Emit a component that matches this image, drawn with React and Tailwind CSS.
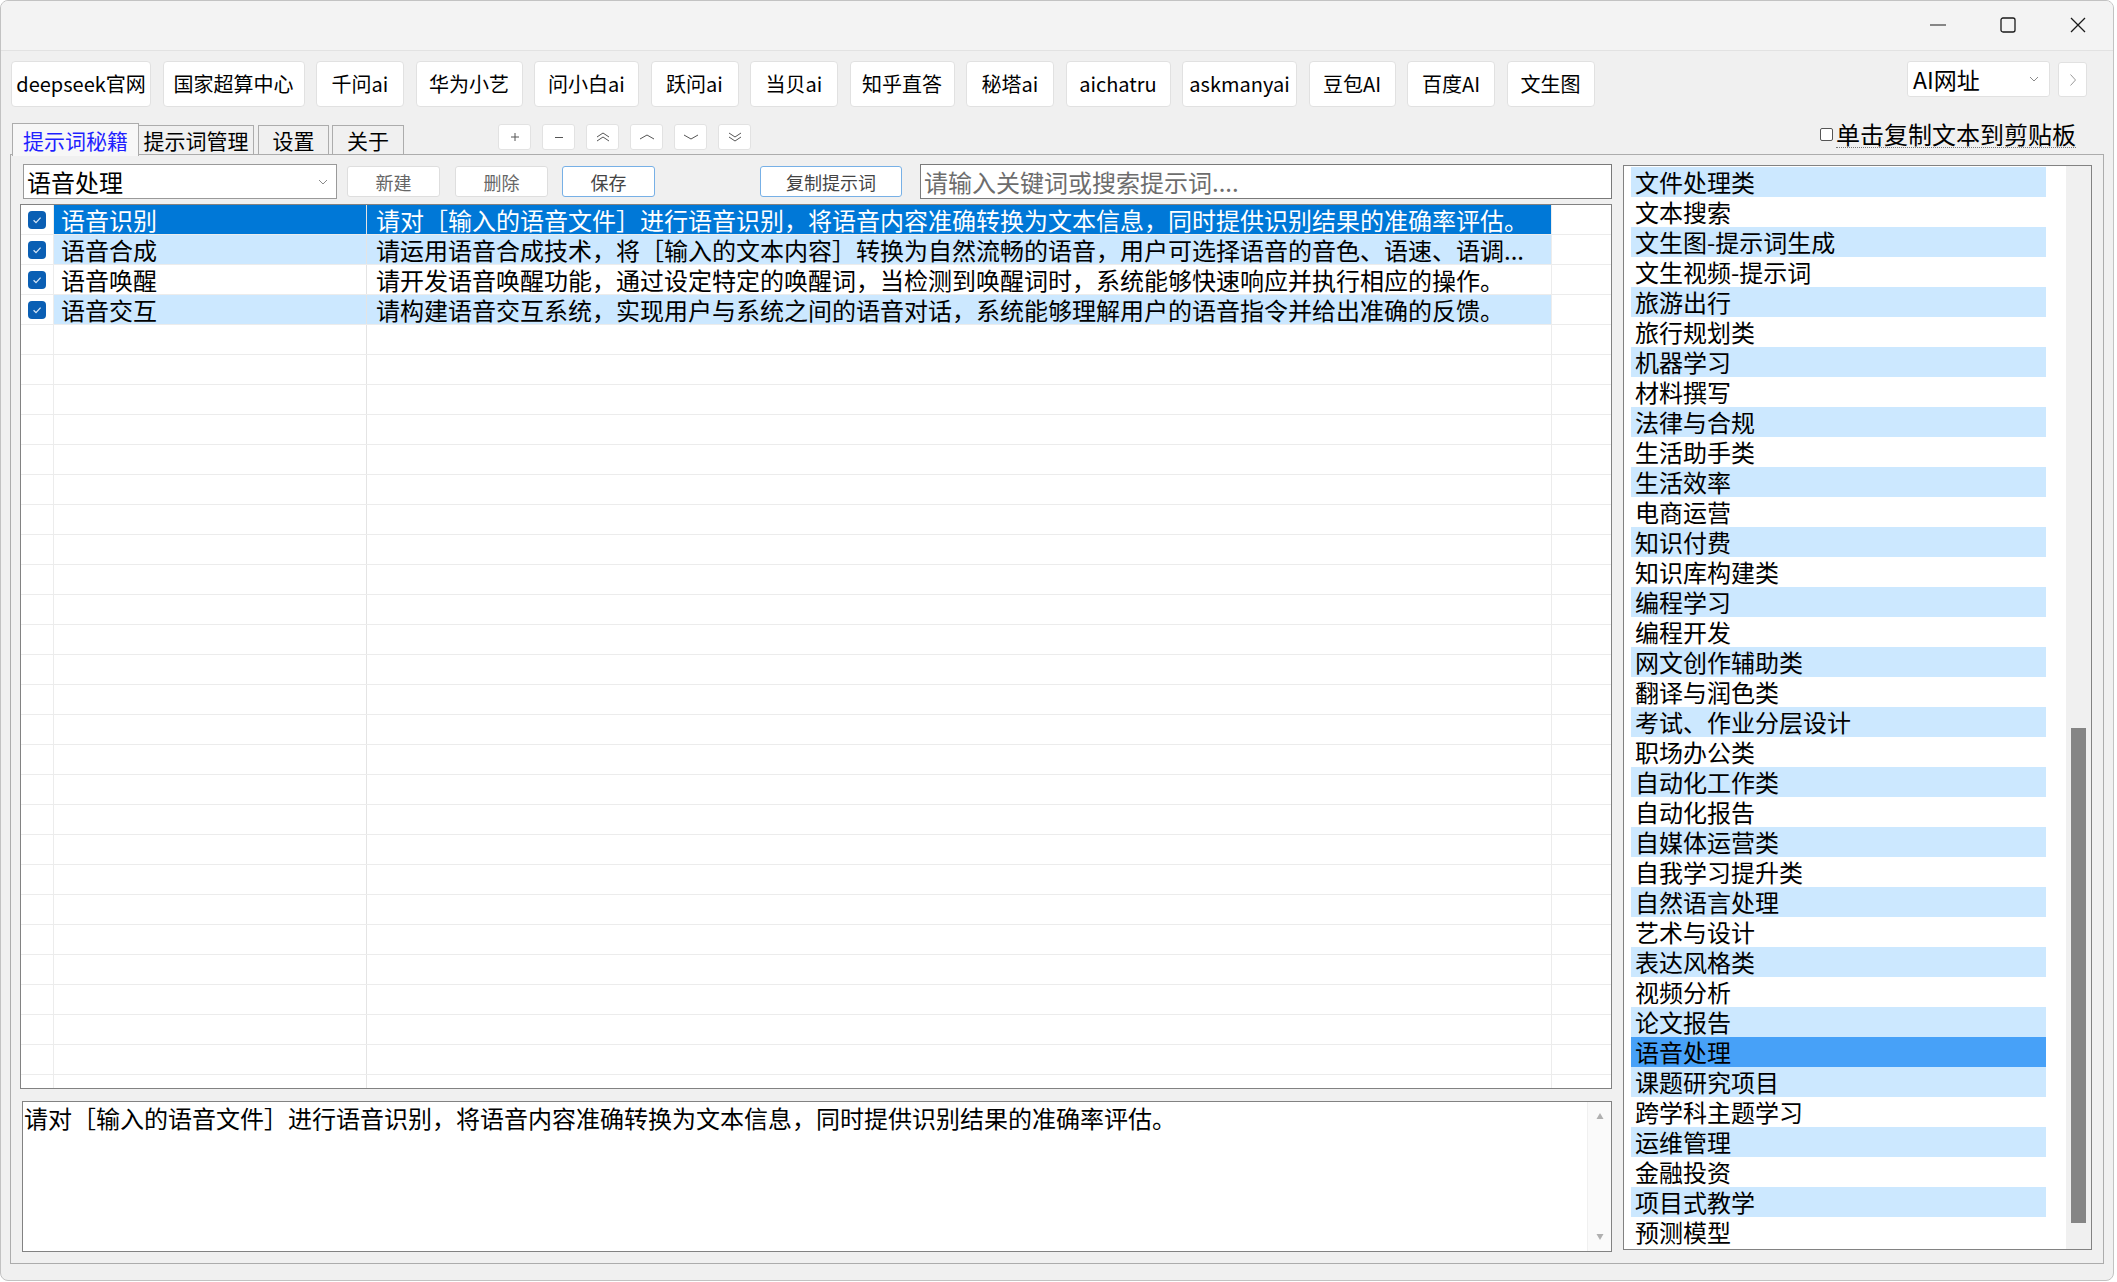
import React from 'react'

const tools = [
  { label: 'deepseek官网', w: 'w-[140px]' },
  { label: '国家超算中心', w: 'w-[142px]' },
  { label: '千问ai', w: 'w-[88px]' },
  { label: '华为小艺', w: 'w-[107px]' },
  { label: '问小白ai', w: 'w-[105px]' },
  { label: '跃问ai', w: 'w-[88px]' },
  { label: '当贝ai', w: 'w-[88px]' },
  { label: '知乎直答', w: 'w-[105px]' },
  { label: '秘塔ai', w: 'w-[88px]' },
  { label: 'aichatru', w: 'w-[105px]' },
  { label: 'askmanyai', w: 'w-[115px]' },
  { label: '豆包AI', w: 'w-[87px]' },
  { label: '百度AI', w: 'w-[88px]' },
  { label: '文生图', w: 'w-[88px]' },
]

const cats = [
  '文件处理类', '文本搜索', '文生图-提示词生成', '文生视频-提示词', '旅游出行', '旅行规划类',
  '机器学习', '材料撰写', '法律与合规', '生活助手类', '生活效率', '电商运营', '知识付费',
  '知识库构建类', '编程学习', '编程开发', '网文创作辅助类', '翻译与润色类', '考试、作业分层设计',
  '职场办公类', '自动化工作类', '自动化报告', '自媒体运营类', '自我学习提升类', '自然语言处理',
  '艺术与设计', '表达风格类', '视频分析', '论文报告', '语音处理', '课题研究项目', '跨学科主题学习',
  '运维管理', '金融投资', '项目式教学', '预测模型',
]

const prompts = [
  { name: '语音识别', text: '请对［输入的语音文件］进行语音识别，将语音内容准确转换为文本信息，同时提供识别结果的准确率评估。' },
  { name: '语音合成', text: '请运用语音合成技术，将［输入的文本内容］转换为自然流畅的语音，用户可选择语音的音色、语速、语调...' },
  { name: '语音唤醒', text: '请开发语音唤醒功能，通过设定特定的唤醒词，当检测到唤醒词时，系统能够快速响应并执行相应的操作。' },
  { name: '语音交互', text: '请构建语音交互系统，实现用户与系统之间的语音对话，系统能够理解用户的语音指令并给出准确的反馈。' },
]

function Check() {
  return (
    <span className="flex h-[18px] w-[18px] items-center justify-center rounded-[4px] bg-[#0a5fb4]">
      <svg width="12" height="12" viewBox="0 0 12 12">
        <path d="M2.6 6.3 5 8.6 9.6 3.6" fill="none" stroke="#d6e6f6" strokeWidth="1.3" />
      </svg>
    </span>
  )
}

function Chevron() {
  return (
    <svg width="10" height="6" viewBox="0 0 10 6">
      <path d="M1 1 5 5 9 1" fill="none" stroke="#8a8a8a" strokeWidth="1" />
    </svg>
  )
}

function SmallBtn({ children }) {
  return (
    <div className="flex h-[26px] w-[33px] items-center justify-center rounded-[3px] border border-[#e2e2e2] bg-white">
      {children}
    </div>
  )
}

export default function App() {
  const rows = [...Array(30)].map((_, i) => prompts[i] || null)

  return (
    <div className="h-[1282px] w-[2117px] bg-white font-['Noto_Sans_CJK_SC','Liberation_Sans',sans-serif] text-black">
      <div className="flex h-[1281px] w-[2114px] flex-col overflow-hidden rounded-[8px] border border-[#c2c2c2] bg-[#f0f0f0]">
        {/* Title bar */}
        <div className="flex h-[50px] shrink-0 justify-end border-b border-[#e2e2e2] bg-[#f3f3f3]">
          <div className="flex w-[70px] items-center justify-center pb-[2px]">
            <svg width="16" height="2" viewBox="0 0 16 2"><path d="M0 1h16" stroke="#1a1a1a" strokeWidth="1.2" /></svg>
          </div>
          <div className="flex w-[70px] items-center justify-center pb-[2px]">
            <svg width="16" height="16" viewBox="0 0 16 16"><rect x="1" y="1" width="14" height="14" rx="2" fill="none" stroke="#1a1a1a" strokeWidth="1.3" /></svg>
          </div>
          <div className="flex w-[70px] items-center justify-center pb-[2px]">
            <svg width="16" height="16" viewBox="0 0 16 16"><path d="M1 1 15 15M15 1 1 15" stroke="#1a1a1a" strokeWidth="1.3" /></svg>
          </div>
        </div>

        {/* Toolbar */}
        <div className="mt-[10px] flex h-[46px] shrink-0 items-start pl-[10px] pr-[26px]">
          <div className="flex gap-[11.5px]">
            {tools.map(t => (
              <div
                key={t.label}
                className={`flex h-[46px] items-center justify-center rounded-[4px] border border-[#e1e1e1] bg-white text-[20px] leading-none ${t.w}`}
              >
                {t.label}
              </div>
            ))}
          </div>
          <div className="ml-auto flex h-[36px] w-[143px] items-center justify-between rounded-[3px] border border-[#e1e1e1] bg-white pl-[5px] pr-[10px] text-[23px] leading-none">
            <span>AI网址</span>
            <Chevron />
          </div>
          <div className="ml-[8px] mt-px flex h-[35px] w-[29px] items-center justify-center rounded-[3px] border border-[#e1e1e1] bg-white">
            <svg width="8" height="14" viewBox="0 0 8 14"><path d="M1.5 1.5 6.5 7 1.5 12.5" fill="none" stroke="#9a9a9a" strokeWidth="1" /></svg>
          </div>
        </div>

        {/* Tabs row */}
        <div className="mt-[16px] flex h-[32px] shrink-0 items-end pl-[11px] pr-[37px]">
          <div className="relative z-10 -mb-px flex h-[33px] w-[127px] items-center justify-center border border-b-0 border-[#acacac] bg-[#f7f7f7] text-[21px] leading-none text-[#1f1fff]">
            提示词秘籍
          </div>
          <div className="flex h-[30px] w-[115px] items-center justify-center border border-b-0 border-l-0 border-[#acacac] bg-[#f0f0f0] text-[21px] leading-none">
            提示词管理
          </div>
          <div className="ml-[4px] flex h-[30px] w-[71px] items-center justify-center border border-b-0 border-[#acacac] bg-[#f0f0f0] text-[21px] leading-none">
            设置
          </div>
          <div className="ml-[3px] flex h-[30px] w-[72px] items-center justify-center border border-b-0 border-[#acacac] bg-[#f0f0f0] text-[21px] leading-none">
            关于
          </div>

          <div className="mb-[5px] ml-[94px] flex gap-[11px] self-start pt-px">
            <SmallBtn>
              <svg width="10" height="10" viewBox="0 0 10 10"><path d="M5 1v8M1 5h8" stroke="#555" strokeWidth="1" /></svg>
            </SmallBtn>
            <SmallBtn>
              <svg width="10" height="10" viewBox="0 0 10 10"><path d="M1 5.5h8" stroke="#555" strokeWidth="1" /></svg>
            </SmallBtn>
            <SmallBtn>
              <svg width="14" height="10" viewBox="0 0 14 10"><path d="M1 5 7 1 13 5M1 9 7 5 13 9" fill="none" stroke="#555" strokeWidth="1" /></svg>
            </SmallBtn>
            <SmallBtn>
              <svg width="16" height="8" viewBox="0 0 16 8"><path d="M1 6 8 2 15 6" fill="none" stroke="#555" strokeWidth="1" /></svg>
            </SmallBtn>
            <SmallBtn>
              <svg width="16" height="8" viewBox="0 0 16 8"><path d="M1 2 8 6 15 2" fill="none" stroke="#555" strokeWidth="1" /></svg>
            </SmallBtn>
            <SmallBtn>
              <svg width="14" height="10" viewBox="0 0 14 10"><path d="M1 1 7 5 13 1M1 5 7 9 13 5" fill="none" stroke="#555" strokeWidth="1" /></svg>
            </SmallBtn>
          </div>

          <div className="mb-[7px] ml-auto flex items-center gap-[3px]">
            <span className="h-[13px] w-[13px] rounded-[2px] border border-[#555] bg-white" />
            <span className="border-b border-dotted border-[#777] text-[24px] leading-[26px]">单击复制文本到剪贴板</span>
          </div>
        </div>

        {/* Tab panel */}
        <div className="-mt-px ml-[9px] flex h-[1110px] w-[2094px] shrink-0 gap-[11px] border border-[#acacac] bg-[#f0f0f0] pl-[9px] pt-[9px]">
          {/* Left column */}
          <div className="flex w-[1592px] flex-col">
            <div className="flex h-[35px] items-start">
              <div className="ml-[3px] flex h-[35px] w-[314px] items-center justify-between border border-[#9a9a9a] bg-white pl-[3px] pr-[8px] text-[24px] leading-none">
                <span>语音处理</span>
                <Chevron />
              </div>
              <div className="ml-[10px] mt-[2px] flex h-[31px] w-[93px] items-center justify-center rounded-[3px] border border-[#dedede] bg-white text-[18px] leading-none text-[#666]">新建</div>
              <div className="ml-[15px] mt-[2px] flex h-[31px] w-[93px] items-center justify-center rounded-[3px] border border-[#dedede] bg-white text-[18px] leading-none text-[#666]">删除</div>
              <div className="ml-[14px] mt-[2px] flex h-[31px] w-[93px] items-center justify-center rounded-[3px] border border-[#77b0e6] bg-white text-[18px] leading-none text-[#444]">保存</div>
              <div className="ml-[105px] mt-[2px] flex h-[31px] w-[142px] items-center justify-center rounded-[3px] border border-[#77b0e6] bg-white text-[18px] leading-none text-[#444]">复制提示词</div>
              <div className="ml-[18px] flex h-[35px] flex-1 items-center border border-[#7a7a7a] bg-white pl-[3px] text-[24px] leading-none text-[#6d6d6d]">
                请输入关键词或搜索提示词....
              </div>
            </div>

            {/* Grid */}
            <div className="mt-[5px] h-[885px] overflow-hidden border border-[#828282] bg-white">
              {rows.map((r, i) => {
                const sel = i === 0
                const band = r && !sel && i % 2 === 1
                const cell = sel ? 'bg-[#0078d7] text-white' : band ? 'bg-[#cce8ff]' : 'bg-white'
                return (
                  <div key={i} className="flex h-[30px] border-b border-[#ececec]">
                    <div className="flex w-[33px] shrink-0 items-center justify-center border-r border-[#ececec] bg-white">
                      {r && <Check />}
                    </div>
                    <div className={`w-[313px] shrink-0 border-r border-[#e4e4e4] pl-[7px] text-[24px] leading-[29px] ${cell}`}>
                      {r ? r.name : ''}
                    </div>
                    <div className={`w-[1185px] shrink-0 overflow-hidden whitespace-nowrap border-r border-[#ececec] pl-[9px] text-[24px] leading-[29px] ${cell}`}>
                      {r ? r.text : ''}
                    </div>
                    <div className="flex-1" />
                  </div>
                )
              })}
            </div>

            {/* Detail text */}
            <div className="ml-[2px] mt-[12px] flex h-[151px] border border-[#828282] bg-white">
              <div className="flex-1 pl-[1px] pt-[1px] text-[24px] leading-[30px]">
                请对［输入的语音文件］进行语音识别，将语音内容准确转换为文本信息，同时提供识别结果的准确率评估。
              </div>
              <div className="flex w-[24px] flex-col items-center justify-between border-l border-[#f0f0f0] bg-[#fafafa] py-[10px]">
                <svg width="8" height="8" viewBox="0 0 8 8"><path d="M4 1 7.5 7H0.5Z" fill="#b0b0b0" /></svg>
                <svg width="8" height="8" viewBox="0 0 8 8"><path d="M4 7 7.5 1H0.5Z" fill="#b0b0b0" /></svg>
              </div>
            </div>
          </div>

          {/* Category list */}
          <div className="mt-px flex h-[1085px] w-[469px] border border-[#828282] bg-white">
            <div className="flex w-[442px] flex-col pl-[7px] pt-px">
              {cats.map((c, i) => (
                <div
                  key={c}
                  className={`h-[30px] w-[415px] shrink-0 pl-[4px] text-[24px] leading-[29px] ${
                    c === '语音处理' ? 'bg-[#47a1f8]' : i % 2 === 0 ? 'bg-[#cce8ff]' : 'bg-white'
                  }`}
                >
                  {c}
                </div>
              ))}
            </div>
            <div className="flex w-[25px] flex-col bg-[#f0f0f0]">
              <div className="h-[562px]" />
              <div className="mx-[5px] h-[495px] bg-[#858585]" />
            </div>
          </div>
        </div>
      </div>
    </div>
  )
}
